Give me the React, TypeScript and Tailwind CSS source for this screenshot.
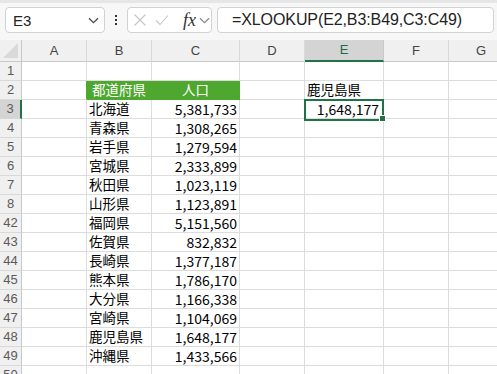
import React from "react";

const COLW = ["w-[65px]", "w-[65px]", "w-[88px]", "w-[65px]", "w-[79px]", "w-[65px]", "w-[65px]"];
const LETTERS = ["A", "B", "C", "D", "E", "F", "G"];

type R = { n: number; b?: string; c?: string; e?: string };

const rows: R[] = [
  { n: 1 },
  { n: 2, b: "都道府県", c: "人口", e: "鹿児島県" },
  { n: 3, b: "北海道", c: "5,381,733", e: "1,648,177" },
  { n: 4, b: "青森県", c: "1,308,265" },
  { n: 5, b: "岩手県", c: "1,279,594" },
  { n: 6, b: "宮城県", c: "2,333,899" },
  { n: 7, b: "秋田県", c: "1,023,119" },
  { n: 8, b: "山形県", c: "1,123,891" },
  { n: 42, b: "福岡県", c: "5,151,560" },
  { n: 43, b: "佐賀県", c: "832,832" },
  { n: 44, b: "長崎県", c: "1,377,187" },
  { n: 45, b: "熊本県", c: "1,786,170" },
  { n: 46, b: "大分県", c: "1,166,338" },
  { n: 47, b: "宮崎県", c: "1,104,069" },
  { n: 48, b: "鹿児島県", c: "1,648,177" },
  { n: 49, b: "沖縄県", c: "1,433,566" },
  { n: 50 },
];

const UI = { fontFamily: "'Liberation Sans', Arial, sans-serif" };
const JP = { fontFamily: "'Noto Sans CJK JP', 'Liberation Sans', sans-serif" };

function Chevron({ color = "#555" }: { color?: string }) {
  return (
    <svg width="11" height="7" viewBox="0 0 11 7">
      <path d="M1 1.2 L5.5 5.6 L10 1.2" fill="none" stroke={color} strokeWidth="1.3" />
    </svg>
  );
}

function Toolbar() {
  return (
    <div className="h-[40px] bg-[#f7f7f7] border-t-[3px] border-[#e6e6e6] flex items-start pt-[4px]" style={UI}>
      <div className="ml-[5px] w-[100px] h-[26px] rounded-[4px] border border-[#d2d2d2] bg-white flex items-center justify-between pl-[7px] pr-[5px]">
        <span className="text-[15px] text-[#222] leading-none">E3</span>
        <Chevron color="#4a4a4a" />
      </div>
      <div className="w-[22px] h-[26px] flex flex-col items-center justify-center gap-[2px]">
        <div className="w-[2px] h-[2px] bg-[#333]" />
        <div className="w-[2px] h-[2px] bg-[#333]" />
        <div className="w-[2px] h-[2px] bg-[#333]" />
      </div>
      <div className="w-[85px] h-[26px] rounded-[4px] border border-[#d2d2d2] bg-white flex items-center pl-[5px]">
        <svg width="14" height="14" viewBox="0 0 14 14">
          <path d="M1.5 1.5 L12.5 12.5 M12.5 1.5 L1.5 12.5" stroke="#c6c6c6" strokeWidth="1.1" fill="none" />
        </svg>
        <svg className="ml-[8px]" width="14" height="14" viewBox="0 0 14 14">
          <path d="M1 7.5 L5 11.5 L13 2.5" stroke="#c6c6c6" strokeWidth="1.1" fill="none" />
        </svg>
        <span
          className="ml-[14px] text-[18px] italic leading-none text-[#333]"
          style={{ fontFamily: "'Liberation Serif', 'Times New Roman', serif" }}
        >
          fx
        </span>
        <span className="ml-[3px] flex items-center">
          <Chevron color="#8a8a8a" />
        </span>
      </div>
      <div className="ml-[5px] flex-1 mr-[3px] h-[26px] rounded-[4px] border border-[#d2d2d2] bg-white flex items-center pl-[14px]">
        <span className="text-[16px] text-[#222] leading-none whitespace-nowrap tracking-[-0.1px]">=XLOOKUP(E2,B3:B49,C3:C49)</span>
      </div>
    </div>
  );
}

function HeaderRow() {
  return (
    <div className="flex h-[22px]" style={UI}>
      <div className="w-[22px] shrink-0 bg-[#f0f0f0] border-r border-b border-r-[#c8c8c8] border-b-[#c8c8c8] flex items-end justify-end pr-[3px] pb-[3px]">
        <svg width="15" height="15" viewBox="0 0 15 15">
          <path d="M15 0 L15 15 L0 15 Z" fill="#d9d9d9" />
        </svg>
      </div>
      {LETTERS.map((l, i) =>
        l === "E" ? (
          <div
            key={l}
            className={`${COLW[i]} shrink-0 bg-[#d4d4d4] border-r border-r-[#c8c8c8] border-b-2 border-b-[#217346] flex items-center justify-center text-[13px] text-[#1e6b40]`}
          >
            {l}
          </div>
        ) : (
          <div
            key={l}
            className={`${COLW[i]} shrink-0 bg-[#f0f0f0] border-r border-b border-r-[#d9d9d9] border-b-[#c8c8c8] flex items-center justify-center text-[13px] text-[#444]`}
          >
            {l}
          </div>
        )
      )}
    </div>
  );
}

function DataRow({ r }: { r: R }) {
  const hdr = r.n === 2;
  const sel = r.n === 3;
  return (
    <div className="flex h-[19px]">
      <div
        className={
          sel
            ? "w-[22px] shrink-0 bg-[#d4d4d4] border-r-2 border-r-[#217346] border-b border-b-[#d6d6d6] flex items-center justify-center text-[13px] text-[#5a5a5a]"
            : "w-[22px] shrink-0 bg-[#f0f0f0] border-r border-b border-r-[#c8c8c8] border-b-[#d9d9d9] flex items-center justify-center text-[13px] text-[#5a5a5a]"
        }
        style={UI}
      >
        {r.n}
      </div>
      {/* A */}
      <div
        className={
          hdr
            ? "w-[65px] shrink-0 border-r border-b border-r-[#4ea72e] border-b-[#dcdcdc]"
            : "w-[65px] shrink-0 border-r border-b border-[#dcdcdc]"
        }
      />
      {/* B */}
      <div
        className={
          hdr
            ? "w-[65px] shrink-0 bg-[#4ea72e] border-r border-b border-[#4ea72e] flex items-center justify-center text-[13.5px] text-white leading-none"
            : "w-[65px] shrink-0 border-r border-b border-[#dcdcdc] flex items-center pl-[2px] text-[13.5px] text-black leading-none whitespace-nowrap"
        }
        style={JP}
      >
        {r.b}
      </div>
      {/* C */}
      <div
        className={
          hdr
            ? "w-[88px] shrink-0 bg-[#4ea72e] border-r border-b border-[#4ea72e] flex items-center justify-center text-[13.5px] text-white leading-none"
            : "w-[88px] shrink-0 border-r border-b border-[#dcdcdc] flex items-center justify-end pr-[2px] text-[14px] text-black leading-none"
        }
        style={JP}
      >
        {r.c}
      </div>
      {/* D */}
      <div className="w-[65px] shrink-0 border-r border-b border-[#dcdcdc]" />
      {/* E */}
      <div
        className={
          sel
            ? "w-[79px] shrink-0 border-r border-b border-[#dcdcdc] flex items-center justify-end pr-[4px] text-[14px] text-black leading-none"
            : "w-[79px] shrink-0 border-r border-b border-[#dcdcdc] flex items-center pl-[2px] text-[13.5px] text-black leading-none whitespace-nowrap"
        }
        style={JP}
      >
        {r.e}
      </div>
      {/* F */}
      <div className="w-[65px] shrink-0 border-r border-b border-[#dcdcdc]" />
      {/* G */}
      <div className="w-[65px] shrink-0 border-r border-b border-[#dcdcdc]" />
    </div>
  );
}

export default function App() {
  return (
    <div className="w-[497px] h-[374px] overflow-hidden bg-white relative">
      <Toolbar />
      <div className="relative">
        <HeaderRow />
        {rows.map((r) => (
          <DataRow key={r.n} r={r} />
        ))}
        {/* selection box around E3 */}
        <div className="absolute left-[304px] top-[59px] w-[80px] h-[22px] border-2 border-[#217346] pointer-events-none" />
        <div className="absolute left-[379px] top-[75px] w-[7px] h-[7px] bg-[#217346] border border-white" />
      </div>
    </div>
  );
}
